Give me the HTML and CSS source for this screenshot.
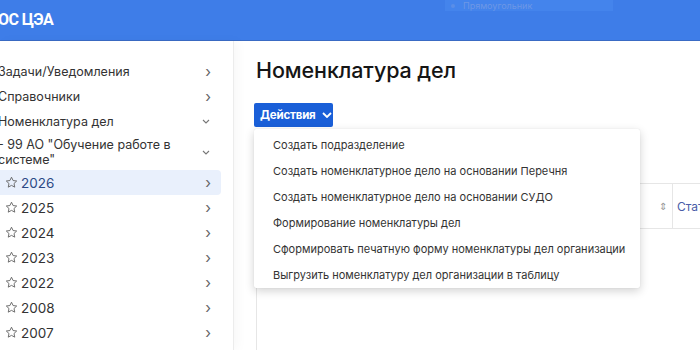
FILE: index.html
```html
<!DOCTYPE html>
<html lang="ru">
<head>
<meta charset="utf-8">
<link rel="stylesheet" href="styles.css">
</head>
<body>
<header class="topbar">
  <div class="brand">ОС ЦЭА</div>
  <div class="ghost"><span class="ghost-dot"></span><span>Прямоугольник</span></div>
</header>
<div class="layout">
  <aside class="sidebar">
    <ul class="nav">
      <li class="nav-item top"><span class="label">Задачи/Уведомления</span><span class="chev">›</span></li>
      <li class="nav-item top"><span class="label">Справочники</span><span class="chev">›</span></li>
      <li class="nav-item top"><span class="label">Номенклатура дел</span><svg class="chev-down" viewBox="0 0 8 5" width="8" height="5"><path d="M1 1l3 3 3-3" fill="none" stroke="#777" stroke-width="1.1"/></svg></li>
      <li class="nav-item top multi"><span class="label">- 99 АО "Обучение работе в<br>системе"</span><svg class="chev-down" viewBox="0 0 8 5" width="8" height="5"><path d="M1 1l3 3 3-3" fill="none" stroke="#777" stroke-width="1.1"/></svg></li>
      <li class="nav-item year active"><span class="label"><svg class="star" viewBox="0 0 14 14" width="13" height="13"><path d="M7 1.3l1.7 3.6 3.9.5-2.9 2.7.8 3.9L7 10.1 3.5 12l.8-3.9L1.4 5.4l3.9-.5z" fill="none" stroke="#666" stroke-width="1"/></svg>2026</span><span class="chev">›</span></li>
      <li class="nav-item year"><span class="label"><svg class="star" viewBox="0 0 14 14" width="13" height="13"><path d="M7 1.3l1.7 3.6 3.9.5-2.9 2.7.8 3.9L7 10.1 3.5 12l.8-3.9L1.4 5.4l3.9-.5z" fill="none" stroke="#666" stroke-width="1"/></svg>2025</span><span class="chev">›</span></li>
      <li class="nav-item year"><span class="label"><svg class="star" viewBox="0 0 14 14" width="13" height="13"><path d="M7 1.3l1.7 3.6 3.9.5-2.9 2.7.8 3.9L7 10.1 3.5 12l.8-3.9L1.4 5.4l3.9-.5z" fill="none" stroke="#666" stroke-width="1"/></svg>2024</span><span class="chev">›</span></li>
      <li class="nav-item year"><span class="label"><svg class="star" viewBox="0 0 14 14" width="13" height="13"><path d="M7 1.3l1.7 3.6 3.9.5-2.9 2.7.8 3.9L7 10.1 3.5 12l.8-3.9L1.4 5.4l3.9-.5z" fill="none" stroke="#666" stroke-width="1"/></svg>2023</span><span class="chev">›</span></li>
      <li class="nav-item year"><span class="label"><svg class="star" viewBox="0 0 14 14" width="13" height="13"><path d="M7 1.3l1.7 3.6 3.9.5-2.9 2.7.8 3.9L7 10.1 3.5 12l.8-3.9L1.4 5.4l3.9-.5z" fill="none" stroke="#666" stroke-width="1"/></svg>2022</span><span class="chev">›</span></li>
      <li class="nav-item year"><span class="label"><svg class="star" viewBox="0 0 14 14" width="13" height="13"><path d="M7 1.3l1.7 3.6 3.9.5-2.9 2.7.8 3.9L7 10.1 3.5 12l.8-3.9L1.4 5.4l3.9-.5z" fill="none" stroke="#666" stroke-width="1"/></svg>2008</span><span class="chev">›</span></li>
      <li class="nav-item year"><span class="label"><svg class="star" viewBox="0 0 14 14" width="13" height="13"><path d="M7 1.3l1.7 3.6 3.9.5-2.9 2.7.8 3.9L7 10.1 3.5 12l.8-3.9L1.4 5.4l3.9-.5z" fill="none" stroke="#666" stroke-width="1"/></svg>2007</span><span class="chev">›</span></li>
    </ul>
  </aside>
  <main class="content">
    <h1 class="title">Номенклатура дел</h1>
    <div class="actions">
      <button class="btn">Действия <svg viewBox="0 0 10 6" width="10" height="6"><path d="M1 1l4 4 4-4" fill="none" stroke="#fff" stroke-width="1.8"/></svg></button>
      <ul class="menu">
        <li>Создать подразделение</li>
        <li>Создать номенклатурное дело на основании Перечня</li>
        <li>Создать номенклатурное дело на основании СУДО</li>
        <li>Формирование номенклатуры дел</li>
        <li>Сформировать печатную форму номенклатуры дел организации</li>
        <li>Выгрузить номенклатуру дел организации в таблицу</li>
      </ul>
    </div>
    <div class="table">
      <div class="thead">
        <div class="th-main"><span class="sort">⇕</span></div>
        <div class="th">Статус</div>
      </div>
    </div>
  </main>
</div>
</body>
</html>
```
FILE: styles.css
```css
* { box-sizing: border-box; }
html, body { margin: 0; padding: 0; height: 100%; overflow: hidden; }
body {
  font-family: Inter, "Noto Sans", sans-serif;
  background: #fff;
  color: #333;
}
.topbar {
  height: 41px;
  background: #3e7de8;
  border-bottom: 1px solid #3a6bc4;
  display: flex;
  align-items: center;
  position: relative;
}
.brand {
  color: #fff;
  font-family: Roboto, Inter, sans-serif;
  font-weight: 700;
  font-size: 16px;
  letter-spacing: -0.6px;
  margin-left: -2px;
  margin-top: -2px;
}
.ghost {
  position: absolute;
  left: 445px;
  top: 0;
  width: 168px;
  height: 11px;
  background: #4484ec;
  color: #6c97e6;
  font-size: 9px;
  display: flex;
  align-items: center;
  gap: 8px;
  padding-left: 6px;
  line-height: 1;
  overflow: hidden;
}
.ghost-dot { width: 4px; height: 4px; background: #5a8ee8; border-radius: 50%; }
.layout { display: flex; height: calc(100% - 41px); }
.sidebar {
  width: 234px;
  flex: none;
  border-right: 1px solid #ececec;
  padding-top: 18px;
  box-shadow: 4px 0 10px rgba(0,0,0,0.03);
  position: relative;
  z-index: 1;
  background: #fff;
  overflow: hidden;
}
.nav { list-style: none; margin: 0; padding: 0; }
.nav-item {
  height: 25px;
  display: flex;
  align-items: center;
  justify-content: space-between;
  font-size: 12.5px;
  color: #333;
  padding-right: 12px;
  margin-right: 12px;
  white-space: nowrap;
}
.nav-item.top .label { margin-left: -2px; }
.nav-item.multi { height: 36px; line-height: 15px; }
.nav-item.year { padding-left: 5px; font-size: 13.5px; }
.nav-item.year .label { display: flex; align-items: center; gap: 3px; }
.nav-item.active { background: #e9f0fc; border-radius: 0 4px 4px 0; color: #2c4a86; }
.star { display: block; }
.chev { color: #666; font-size: 15px; line-height: 1; margin-right: -2px; }
.chev-down { margin-right: -1px; }
.content {
  flex: 1;
  padding: 16px 0 0 22px;
  position: relative;
  min-width: 0;
}
.title {
  margin: 0;
  font-size: 21.5px;
  font-weight: 500;
  color: #151515;
  letter-spacing: -0.1px;
  height: 26px;
  line-height: 26px;
}
.actions { position: relative; margin-top: 20px; }
.btn {
  height: 24px;
  width: 79px;
  border: none;
  border-radius: 2px;
  background: #1a5fd8;
  color: #fff;
  font-family: Inter, sans-serif;
  font-weight: 700;
  font-size: 11.5px;
  letter-spacing: -0.2px;
  display: flex;
  align-items: center;
  gap: 6px;
  padding: 0 0 0 6px;
  margin-left: -2px;
}
.menu {
  position: absolute;
  top: 26px;
  left: -2px;
  width: 386px;
  margin: 0;
  padding: 3px 0 0;
  list-style: none;
  background: #fff;
  border-radius: 2px;
  box-shadow: 0 3px 10px rgba(0,0,0,0.18), 0 0 1px rgba(0,0,0,0.15);
  z-index: 5;
}
.menu li {
  height: 26px;
  line-height: 26px;
  padding-left: 19px;
  font-size: 11px;
  color: #333;
  white-space: nowrap;
}
.table {
  margin-top: 56px;
  border-left: 1px solid #e6e6e6;
  border-top: 1px solid #e6e6e6;
  height: 400px;
}
.thead {
  display: flex;
  height: 45px;
  border-bottom: 1px solid #e6e6e6;
}
.th-main {
  width: 415px;
  flex: none;
  display: flex;
  align-items: center;
  justify-content: flex-end;
  padding-right: 5px;
}
.sort { color: #999; font-size: 10px; }
.th {
  border-left: 1px solid #e6e6e6;
  display: flex;
  align-items: center;
  padding-left: 4px;
  font-size: 12px;
  color: #4a5ca8;
  white-space: nowrap;
}
```
